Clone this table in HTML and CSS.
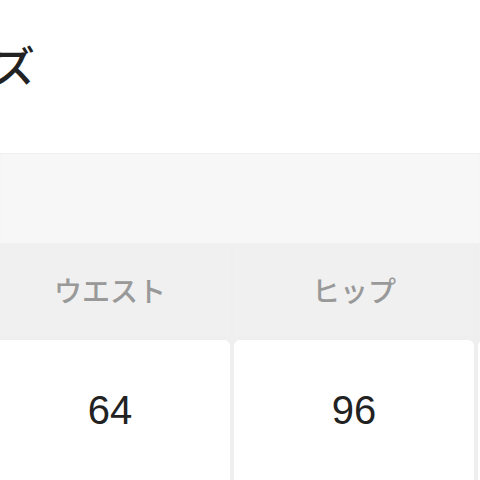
FILE: index.html
```html
<!DOCTYPE html>
<html lang="ja">
<head>
<meta charset="utf-8">
<link rel="stylesheet" href="styles.css">
</head>
<body>
<div class="page">
  <h2 class="title">サイズ</h2>
  <div class="band"></div>
  <div class="table">
    <div class="th">ウエスト</div>
    <div class="th">ヒップ</div>
    <div class="th"></div>
    <div class="td">64</div>
    <div class="td">96</div>
    <div class="td"></div>
  </div>
</div>
</body>
</html>
```
FILE: styles.css
```css
html, body {
  margin: 0;
  padding: 0;
  background: #fff;
}
.page {
  width: 480px;
  height: 480px;
  overflow: hidden;
  font-family: "Noto Sans CJK JP", "Noto Sans", sans-serif;
}
.title {
  margin: 34px 0 59px -90px;
  font-size: 42px;
  line-height: 60px;
  font-weight: 500;
  color: #222;
  white-space: nowrap;
}
.band {
  height: 90px;
  background: #f7f7f7;
  box-shadow: inset 0 1px 2px rgba(0,0,0,0.03);
}
.table {
  display: grid;
  grid-template-columns: repeat(3, 240px);
  grid-template-rows: 93px 150px;
  gap: 4px;
  margin-left: -10px;
  background: #efefef;
}
.th {
  display: flex;
  align-items: center;
  justify-content: center;
  background: #f0f0f0;
  color: #999;
  font-size: 28px;
  font-weight: 500;
}
.td {
  display: flex;
  align-items: center;
  justify-content: center;
  background: #fff;
  border-radius: 6px;
  color: #222;
  font-family: "Liberation Sans", Arial, sans-serif;
  font-size: 40px;
  padding-bottom: 10px;
}
```
